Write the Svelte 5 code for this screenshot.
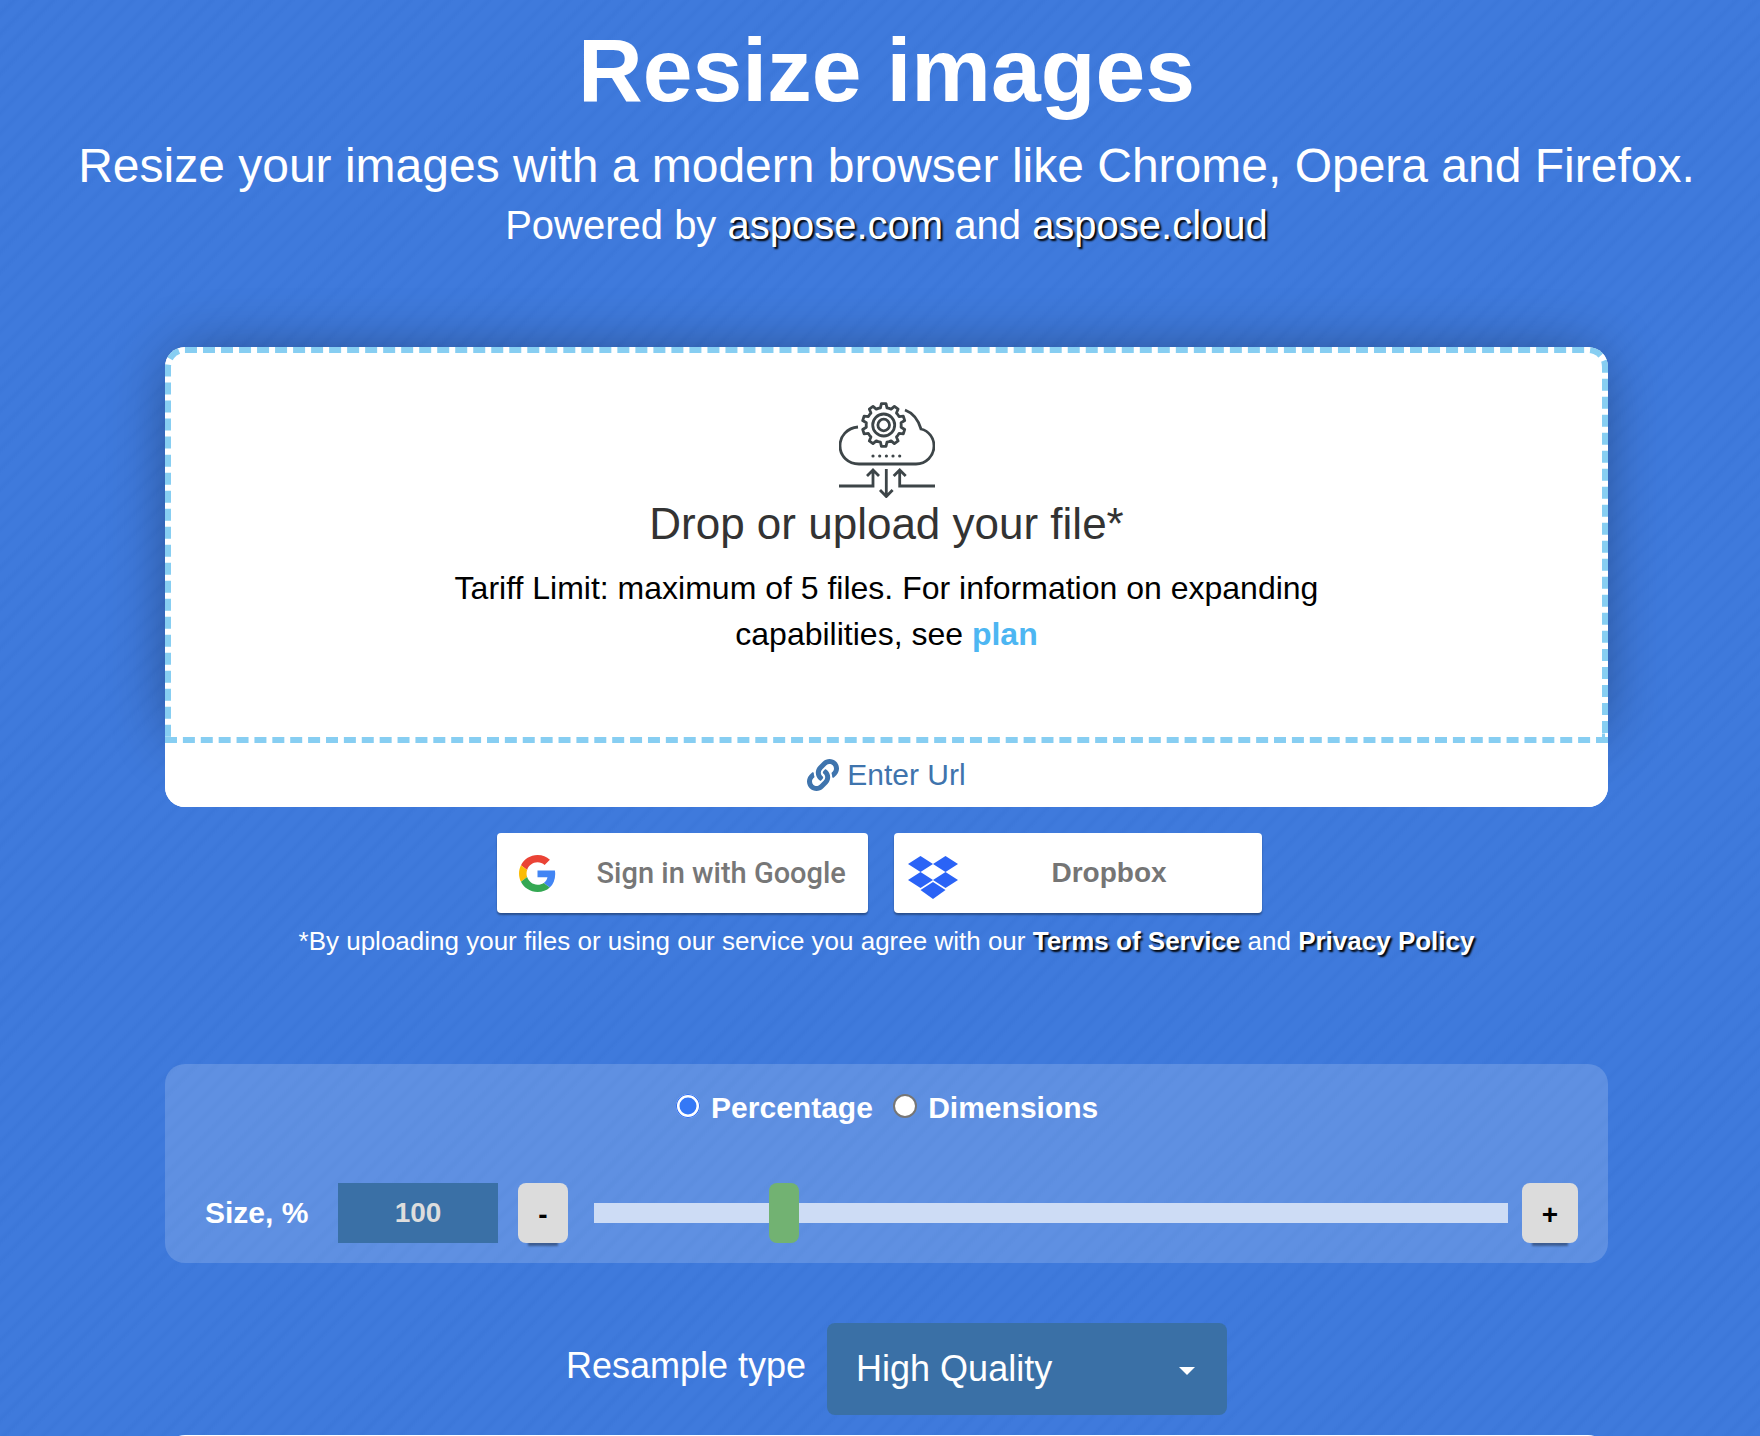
<script>
  let size = $state(100);
  let mode = $state('percentage');

  // gear outline for the upload icon, 10 teeth around (cx, cy)
  function gearPath(cx, cy, outer, inner, teeth) {
    const pts = [];
    const step = (Math.PI * 2) / teeth;
    for (let i = 0; i < teeth; i++) {
      const a = i * step - Math.PI / 2;
      const list = [
        [inner, a - step * 0.5],
        [inner, a - step * 0.3],
        [outer, a - step * 0.17],
        [outer, a + step * 0.17],
        [inner, a + step * 0.3]
      ];
      for (const [r, t] of list) {
        pts.push((cx + r * Math.cos(t)).toFixed(2) + ' ' + (cy + r * Math.sin(t)).toFixed(2));
      }
    }
    return 'M' + pts.join('L') + 'Z';
  }

  const gear = gearPath(44.7, 23, 21.5, 17.5, 10);

  function change(delta) {
    size = Math.min(500, Math.max(1, size + delta));
  }
</script>

<div class="page">
  <header class="head">
    <h1>Resize images</h1>
    <p class="sub">Resize your images with a modern browser like Chrome, Opera and Firefox.</p>
    <p class="powered">Powered by <a href="#top">aspose.com</a> and <a href="#top">aspose.cloud</a></p>
  </header>

  <section class="card">
    <div class="drop">
      <svg class="cloud" viewBox="0 0 96 96" width="96" height="96" fill="none" stroke="#3d4548" stroke-width="2.8">
        <path d={gear} stroke-linejoin="round" />
        <circle cx="44.7" cy="23" r="11" />
        <circle cx="44.7" cy="23" r="5.8" />
        <path d="M19 25C8 26 1 34 1 44C1 54 9 62 20 62H77C87 62 95 54 95 44C95 36 90 29 82 27C79 17 74 11 66 8" />
        <path d="M34 54h.01M40.7 54h.01M47.4 54h.01M54 54h.01M60.7 54h.01" stroke-width="3.2" stroke-linecap="round" />
        <path d="M0 84H34V68M28 74L34 68L40 74M96 84H60.7V68M54.7 74L60.7 68L66.7 74M47.3 67V94M41 88L47.3 94.500L53.600 88" />
      </svg>
      <h2>Drop or upload your file*</h2>
      <p class="limit">Tariff Limit: maximum of 5 files. For information on expanding<br />capabilities, see <a href="#top">plan</a></p>
    </div>
    <a class="url" href="#top">
      <svg viewBox="0 0 512 512" width="32" height="32" fill="currentColor"><path d="M326.612 185.391c59.747 59.809 58.927 155.698.36 214.59-.11.12-.24.25-.36.37l-67.2 67.2c-59.27 59.27-155.699 59.262-214.96 0-59.27-59.26-59.27-155.7 0-214.96l37.106-37.106c9.84-9.84 26.786-3.3 27.294 10.606.648 17.722 3.826 35.527 9.69 52.721 1.986 5.822.567 12.262-3.783 16.612l-13.087 13.087c-28.026 28.026-28.905 73.66-1.155 101.96 28.024 28.579 74.086 28.749 102.325.51l67.2-67.19c28.191-28.191 28.073-73.757 0-101.83-3.701-3.694-7.429-6.564-10.341-8.569a16.037 16.037 0 0 1-6.947-12.606c-.396-10.567 3.348-21.456 11.698-29.806l21.054-21.055c5.521-5.521 14.182-6.199 20.584-1.731a152.482 152.482 0 0 1 20.522 17.197zM467.547 44.449c-59.261-59.262-155.69-59.27-214.96 0l-67.2 67.2c-.12.12-.25.25-.36.37-58.566 58.892-59.387 154.781.36 214.59a152.454 152.454 0 0 0 20.521 17.196c6.402 4.468 15.064 3.789 20.584-1.731l21.054-21.055c8.35-8.35 12.094-19.239 11.698-29.806a16.037 16.037 0 0 0-6.947-12.606c-2.912-2.005-6.64-4.875-10.341-8.569-28.073-28.073-28.191-73.639 0-101.83l67.2-67.19c28.239-28.239 74.3-28.069 102.325.51 27.75 28.3 26.872 73.934-1.155 101.96l-13.087 13.087c-4.35 4.35-5.769 10.79-3.783 16.612 5.864 17.194 9.042 34.999 9.69 52.721.509 13.906 17.454 20.446 27.294 10.606l37.106-37.106c59.271-59.259 59.271-155.699.001-214.959z" /></svg>
      <span>Enter Url</span>
    </a>
  </section>

  <div class="providers">
    <button class="provider google">
      <svg viewBox="0 0 48 48" width="37" height="37">
        <path fill="#EA4335" d="M24 9.5c3.54 0 6.71 1.22 9.21 3.6l6.85-6.85C35.9 2.38 30.47 0 24 0 14.62 0 6.51 5.38 2.56 13.22l7.98 6.19C12.43 13.72 17.74 9.5 24 9.5z" />
        <path fill="#4285F4" d="M46.98 24.55c0-1.57-.15-3.09-.38-4.55H24v9.02h12.94c-.58 2.96-2.26 5.48-4.78 7.18l7.73 6c4.51-4.18 7.09-10.36 7.09-17.65z" />
        <path fill="#FBBC05" d="M10.53 28.59c-.48-1.45-.76-2.99-.76-4.59s.27-3.14.76-4.59l-7.98-6.19C.92 16.46 0 20.12 0 24c0 3.88.92 7.54 2.56 10.78l7.97-6.19z" />
        <path fill="#34A853" d="M24 48c6.48 0 11.93-2.13 15.89-5.81l-7.73-6c-2.15 1.45-4.92 2.3-8.16 2.3-6.26 0-11.57-4.22-13.47-9.91l-7.98 6.19C6.51 42.62 14.62 48 24 48z" />
      </svg>
      <span>Sign in with Google</span>
    </button>
    <button class="provider dropbox">
      <svg class="dropbox-logo" viewBox="0 0 50 43" width="50" height="43" fill="#2a63f6">
        <path d="M12.500 0L25 8 12.500 16 0 8z" />
        <path d="M37.500 0L50 8 37.500 16 25 8z" />
        <path d="M12.500 16L25 24 12.500 32 0 24z" />
        <path d="M37.500 16L50 24 37.500 32 25 24z" />
        <path d="M25 26L37.500 34 25 43 12.500 34z" />
      </svg>
      <span>Dropbox</span>
    </button>
  </div>

  <p class="legal">*By uploading your files or using our service you agree with our <a href="#top">Terms of Service</a> and <a href="#top">Privacy Policy</a></p>

  <section class="panel">
    <div class="modes">
      <label><input type="radio" name="mode" value="percentage" bind:group={mode} /> Percentage</label>
      <label><input type="radio" name="mode" value="dimensions" bind:group={mode} /> Dimensions</label>
    </div>
    <div class="size-row">
      <span class="size-label">Size, %</span>
      <input class="size-input" type="text" bind:value={size} />
      <button class="step minus" onclick={() => change(-1)}>-</button>
      <input class="range" type="range" min="1" max="500" bind:value={size} />
      <button class="step plus" onclick={() => change(1)}>+</button>
    </div>
  </section>

  <div class="resample">
    <span class="resample-label">Resample type</span>
    <button class="select">
      <span>High Quality</span>
      <i class="caret"></i>
    </button>
  </div>

  <div class="next-card"></div>
</div>

<style>
  :global(body) {
    margin: 0;
    background-color: #3e79dc;
    background-image: repeating-linear-gradient(135deg, #3f7adc 0, #3f7adc 6px, #3c77d9 10px, #3f7adc 14px);
  }

  .page {
    height: 1436px;
    overflow: hidden;
    box-sizing: border-box;
    padding: 20px 0 0 13px;
    display: flex;
    flex-direction: column;
    align-items: center;
    font-family: "Liberation Sans", Arial, sans-serif;
    color: #fff;
  }

  .head {
    text-align: center;
    height: 327px;
    flex: none;
  }

  h1 {
    margin: 0;
    font-size: 89.500px;
    line-height: 100px;
    font-weight: 700;
  }

  .sub {
    margin: 16px 0 0;
    font-size: 48px;
    line-height: 60px;
    white-space: nowrap;
  }

  .powered {
    margin: 4px 0 0;
    font-size: 40px;
    line-height: 50px;
  }

  .powered a {
    color: #fff;
    text-decoration: none;
    text-shadow: 2px 2px 2px #000;
  }

  .card {
    flex: none;
    width: 1443px;
    height: 460px;
    background: #fff;
    border-radius: 20px;
    display: flex;
    flex-direction: column;
  }

  .drop {
    height: 396px;
    box-sizing: border-box;
    border: 6px dashed #87cef2;
    border-radius: 20px 20px 0 0;
    background: #fff;
    box-shadow: 0 0 64px -12px rgba(0, 0, 0, 0.45);
    padding-top: 49px;
    text-align: center;
    color: #000;
  }

  .cloud {
    display: block;
    margin: 0 auto;
  }

  h2 {
    margin: -4px 0 0;
    font-size: 44px;
    line-height: 60px;
    font-weight: 400;
    color: #333;
  }

  .limit {
    margin: 11px 0 0;
    font-size: 32px;
    line-height: 46px;
  }

  .limit a {
    color: #4db6f2;
    font-weight: 700;
    text-decoration: none;
  }

  .url {
    flex: 1;
    display: flex;
    align-items: center;
    justify-content: center;
    gap: 8px;
    color: #3f74ad;
    font-size: 30px;
    text-decoration: none;
    background: #fff;
    border-radius: 0 0 20px 20px;
  }

  .providers {
    flex: none;
    display: flex;
    gap: 26px;
    margin: 26px 0 0 -15px;
  }

  .provider {
    height: 80px;
    border: 0;
    border-radius: 4px;
    background: #fff;
    display: flex;
    align-items: center;
    padding: 0;
    font-family: inherit;
    box-shadow: 0 2px 2px rgba(0, 0, 0, 0.35);
  }

  .google {
    width: 371px;
    padding-left: 22px;
    gap: 41px;
    font-family: Roboto, sans-serif;
    font-weight: 500;
    font-size: 29px;
    color: #777;
  }

  .dropbox {
    width: 368px;
    padding-left: 14px;
    gap: 94px;
    font-weight: 700;
    font-size: 28px;
    color: #757575;
  }

  .dropbox-logo {
    margin-top: 9px;
  }

  .legal {
    flex: none;
    margin: 10px 0 0;
    font-size: 26px;
    line-height: 36px;
  }

  .legal a {
    color: #fff;
    font-weight: 700;
    text-decoration: none;
    text-shadow: 2px 2px 2px #000;
  }

  .panel {
    flex: none;
    width: 1443px;
    height: 199px;
    margin-top: 105px;
    box-sizing: border-box;
    padding: 24px 30px 20px 40px;
    border-radius: 20px;
    background: rgba(255, 255, 255, 0.17);
    display: flex;
    flex-direction: column;
    justify-content: space-between;
  }

  .modes {
    display: flex;
    justify-content: center;
    gap: 20px;
    margin-left: -9px;
    font-size: 30px;
    font-weight: 700;
    line-height: 40px;
  }

  .modes input {
    appearance: none;
    width: 24px;
    height: 24px;
    margin: 0 3px 9px 0;
    vertical-align: middle;
    border-radius: 50%;
    background: #fff;
    border: 2px solid #767676;
    box-sizing: border-box;
  }

  .modes input:checked {
    background: #3478f6;
    border: 0;
    box-shadow: inset 0 0 0 1px #2f6ff0, inset 0 0 0 3.500px #fff;
  }

  .size-row {
    display: flex;
    align-items: center;
  }

  .size-label {
    width: 133px;
    font-size: 30px;
    font-weight: 700;
  }

  .size-input {
    width: 160px;
    height: 60px;
    box-sizing: border-box;
    border: 0;
    background: #3a70a6;
    color: #ddd;
    font: 700 28px "Liberation Sans", Arial, sans-serif;
    text-align: center;
  }

  .step {
    height: 60px;
    border: 0;
    padding: 4px 0 0;
    border-radius: 8px;
    background: #dcdcdc;
    color: #000;
    font: 700 28px "Liberation Sans", Arial, sans-serif;
    box-shadow: 0 13px 2px -10px rgba(0, 0, 0, 0.35);
  }

  .minus {
    width: 50px;
    margin-left: 20px;
  }

  .plus {
    width: 56px;
    margin-left: 14px;
  }

  .range {
    flex: 1;
    appearance: none;
    height: 60px;
    margin: 0 0 0 26px;
    background: transparent;
  }

  .range::-webkit-slider-runnable-track {
    height: 20px;
    background: #cddcf5;
  }

  .range::-webkit-slider-thumb {
    appearance: none;
    width: 30px;
    height: 60px;
    margin-top: -20px;
    border-radius: 8px;
    background: #72b272;
  }

  .resample {
    flex: none;
    display: flex;
    align-items: center;
    margin: 60px 0 0 20px;
    gap: 21px;
  }

  .resample-label {
    font-size: 36px;
    padding-bottom: 6px;
  }

  .select {
    width: 400px;
    height: 92px;
    border: 0;
    border-radius: 8px;
    background: #3a70a6;
    color: #fff;
    font: 36px "Liberation Sans", Arial, sans-serif;
    display: flex;
    align-items: center;
    justify-content: space-between;
    padding: 0 32px 0 29px;
  }

  .caret {
    width: 0;
    height: 0;
    border: 8px solid transparent;
    border-top-color: #fff;
    border-bottom: 0;
    margin-top: 4px;
  }

  .next-card {
    flex: none;
    width: 1443px;
    height: 40px;
    margin-top: 20px;
    background: #fff;
    border-radius: 20px 20px 0 0;
  }
</style>
